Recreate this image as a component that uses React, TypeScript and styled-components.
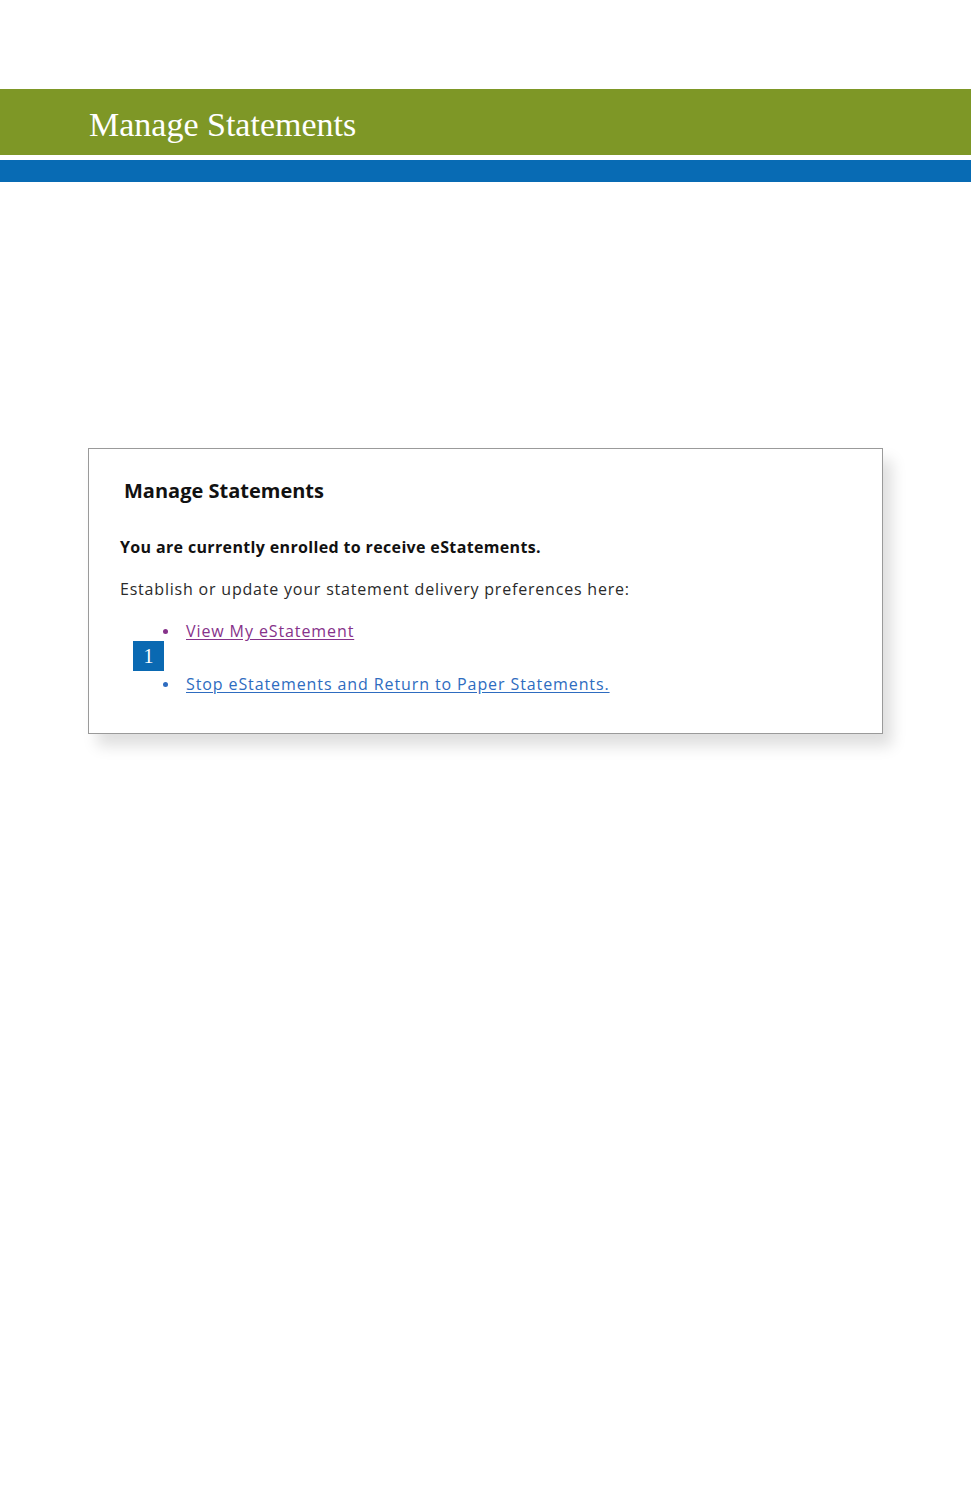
import React from "react";
import styled, { createGlobalStyle } from "styled-components";

const GlobalStyle = createGlobalStyle`
  body {
    margin: 0;
    background: #ffffff;
  }
`;

interface ILink {
  label: string;
  color: string;
  gap?: number;
}

const links: ILink[] = [
  { label: "View My eStatement", color: "#86328a" },
  { label: "Stop eStatements and Return to Paper Statements.", color: "#2e6cc0", gap: 33 },
];

const App = () => {
  return (
    <Page>
      <GlobalStyle />
      <Banner>
        <GreenBar>
          <BannerTitle>Manage Statements</BannerTitle>
        </GreenBar>
        <BlueBar />
      </Banner>

      <Card>
        <Heading>Manage Statements</Heading>
        <Notice>You are currently enrolled to receive eStatements.</Notice>
        <Text>Establish or update your statement delivery preferences here:</Text>
        <List>
          {links.map((item) => (
            <Item key={item.label} $gap={item.gap}>
              <Bullet $color={item.color} />
              <Link href="#" $color={item.color}>
                {item.label}
              </Link>
            </Item>
          ))}
        </List>
        <Badge>1</Badge>
      </Card>
    </Page>
  );
};

export default App;

const Page = styled.div`
  width: 971px;
  min-height: 1500px;
  padding-top: 89px;
  box-sizing: border-box;
`;

const Banner = styled.header`
  display: flex;
  flex-direction: column;
  gap: 5px;
`;

const GreenBar = styled.div`
  height: 66px;
  background: #7e9726;
  display: flex;
  align-items: center;
  padding-left: 89px;
`;

const BannerTitle = styled.h1`
  margin: 0;
  color: #ffffff;
  font-family: "Liberation Serif", "Times New Roman", serif;
  font-weight: 400;
  font-size: 34px;
  line-height: 1;
  padding-top: 6px;
`;

const BlueBar = styled.div`
  height: 22px;
  background: #086bb4;
`;

const Card = styled.section`
  position: relative;
  margin: 266px 0 0 88px;
  width: 795px;
  height: 286px;
  box-sizing: border-box;
  border: 1px solid #9a9a9a;
  background: #ffffff;
  box-shadow: 9px 12px 14px rgba(0, 0, 0, 0.13);
  padding: 30px 0 0 31px;
  font-family: "Open Sans", "DejaVu Sans", sans-serif;
  color: #1c1c1c;
`;

const Heading = styled.h2`
  margin: 0 0 34px 4px;
  font-size: 20px;
  line-height: 24px;
  font-weight: 700;
  color: #111111;
`;

const Notice = styled.p`
  margin: 0 0 22px;
  font-size: 16px;
  line-height: 20px;
  font-weight: 700;
  letter-spacing: 0.35px;
  color: #111111;
`;

const Text = styled.p`
  margin: 0 0 22px;
  font-size: 16px;
  line-height: 20px;
  letter-spacing: 0.8px;
  color: #2a2a2a;
`;

const List = styled.ul`
  margin: 0;
  padding: 0 0 0 43px;
  list-style: none;
`;

const Item = styled.li<{ $gap?: number }>`
  display: flex;
  align-items: center;
  gap: 18px;
  margin-top: ${(p) => p.$gap ?? 0}px;
  font-size: 16px;
  line-height: 20px;
  letter-spacing: 0.9px;
`;

const Bullet = styled.span<{ $color: string }>`
  width: 5px;
  height: 5px;
  border-radius: 50%;
  background: ${(p) => p.$color};
  flex-shrink: 0;
`;

const Link = styled.a<{ $color: string }>`
  color: ${(p) => p.$color};
  text-decoration: underline;
  text-underline-offset: 2px;
`;

const Badge = styled.div`
  position: absolute;
  left: 44px;
  top: 192px;
  width: 31px;
  height: 30px;
  background: #0a69b2;
  color: #ffffff;
  font-family: "Liberation Serif", "Times New Roman", serif;
  font-size: 20px;
  display: flex;
  align-items: center;
  justify-content: center;
`;
